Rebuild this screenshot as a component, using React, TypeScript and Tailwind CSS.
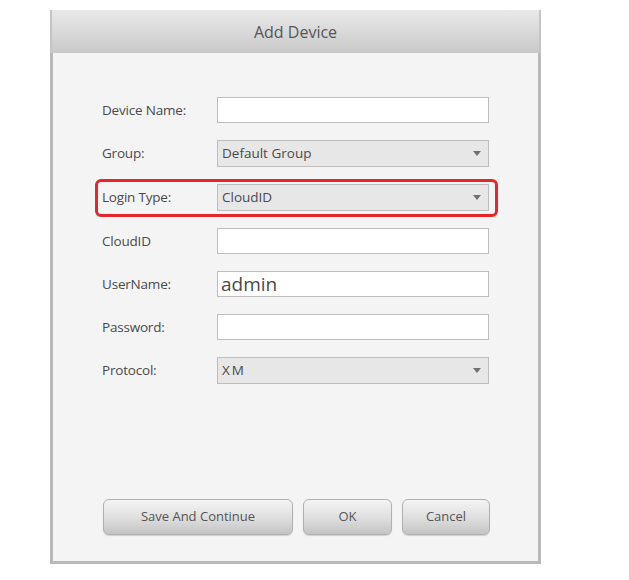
import React from "react";

const font = { fontFamily: '"Open Sans", "Noto Sans", "DejaVu Sans", sans-serif' };

function Arrow() {
  return (
    <svg width="8" height="5" viewBox="0 0 8 5" className="shrink-0">
      <polygon points="0,0 8,0 4,5" fill="#707070" />
    </svg>
  );
}

function Label({ children }: { children: React.ReactNode }) {
  return <div className="w-[115px] shrink-0 text-[13.5px] text-[#4a4a4a] tracking-[-0.2px]">{children}</div>;
}

function TextBox({ value, big }: { value?: string; big?: boolean }) {
  return (
    <div className="w-[272px] h-[26px] border border-[#bdbdbd] bg-white flex items-center pl-[3px]">
      {value ? (
        <span className={big ? "text-[19px] text-[#4a4a4a] leading-none" : "text-[13px] text-[#4a4a4a]"}>{value}</span>
      ) : null}
    </div>
  );
}

function Select({ value, spaced }: { value: string; spaced?: boolean }) {
  return (
    <div className="w-[272px] h-[27px] border border-[#bdbdbd] bg-[#e7e7e7] flex items-center justify-between pl-[4px] pr-[7px]">
      <span className={"text-[13.5px] text-[#4a4a4a] " + (spaced ? "tracking-[2px]" : "")}>{value}</span>
      <Arrow />
    </div>
  );
}

function Row({ label, children, highlight }: { label: string; children: React.ReactNode; highlight?: boolean }) {
  return (
    <div className="relative flex items-center">
      <Label>{label}</Label>
      {children}
      {highlight ? (
        <div className="absolute left-[-7px] top-[-5px] w-[403px] h-[38px] border-[3px] border-[#e8262a] rounded-[6px]" />
      ) : null}
    </div>
  );
}

function Btn({ children, w }: { children: React.ReactNode; w: string }) {
  return (
    <div
      className={
        w +
        " h-[36px] rounded-[6px] border border-[#b0b0b0] bg-gradient-to-b from-[#f4f4f4] via-[#e0e0e0] to-[#c4c4c4] flex items-center justify-center text-[13px] font-medium text-[#555] shadow-[0_1px_1px_rgba(0,0,0,0.15)]"
      }
    >
      {children}
    </div>
  );
}

export default function App() {
  return (
    <div className="w-[629px] h-[580px] bg-white pt-[10px] pl-[50px]" style={font}>
      <div className="w-[491px] h-[554px] flex flex-col">
        <div className="h-[43px] shrink-0 bg-gradient-to-b from-[#e9e9e9] to-[#c9c9c9] border-x-[2px] border-[#c4c4c4] flex items-center justify-center text-[16px] text-[#555]">
          Add Device
        </div>
        <div className="flex-1 flex flex-col border-x-[3px] border-b-[3px] border-[#b9b9b9] bg-[#f4f4f4] pl-[49px] pt-[44px] pb-[26px]">
          <div className="flex flex-col gap-[17px]">
            <Row label="Device Name:">
              <TextBox />
            </Row>
            <Row label="Group:">
              <Select value="Default Group" />
            </Row>
            <Row label="Login Type:" highlight>
              <Select value="CloudID" />
            </Row>
            <Row label="CloudID">
              <TextBox />
            </Row>
            <Row label="UserName:">
              <TextBox value="admin" big />
            </Row>
            <Row label="Password:">
              <TextBox />
            </Row>
            <Row label="Protocol:">
              <Select value="XM" spaced />
            </Row>
          </div>
          <div className="flex-1" />
          <div className="flex gap-[10px] pl-[1px]">
            <Btn w="w-[190px]">Save And Continue</Btn>
            <Btn w="w-[89px]">OK</Btn>
            <Btn w="w-[88px]">Cancel</Btn>
          </div>
        </div>
      </div>
    </div>
  );
}
